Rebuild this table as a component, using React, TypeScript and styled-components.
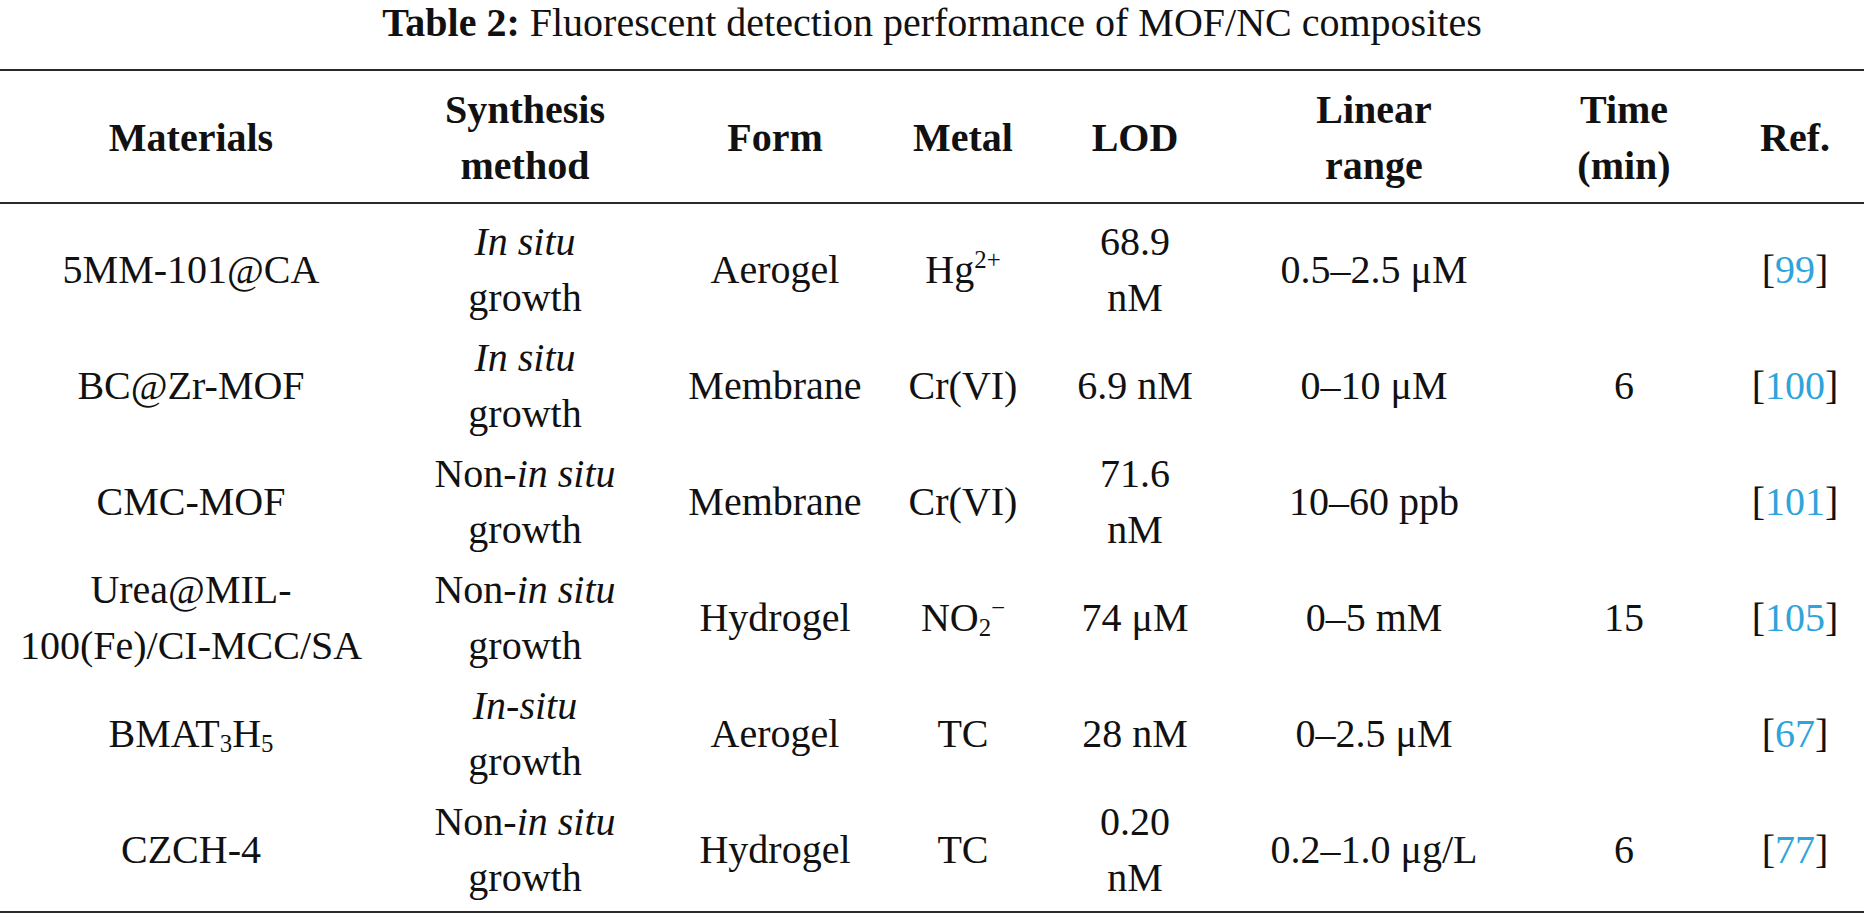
import React from 'react'
import styled, { createGlobalStyle } from 'styled-components'

const GlobalStyle = createGlobalStyle`
  html, body {
    margin: 0;
    padding: 0;
    background: #ffffff;
  }
  body {
    font-family: 'Liberation Serif', 'Times New Roman', serif;
    color: #111111;
  }
`

const Page = styled.div`
  width: 1864px;
  font-size: 40px;
`

const Caption = styled.div`
  text-align: center;
  line-height: 46px;
  height: 46px;
  margin-bottom: 23px;

  b {
    font-weight: 700;
  }
`

const Table = styled.table`
  width: 100%;
  border-collapse: collapse;
  table-layout: fixed;
  border-top: 2px solid #2a2a2a;
  border-bottom: 2px solid #2a2a2a;
`

const HeadCell = styled.th`
  font-weight: 700;
  line-height: 56px;
  padding: 11px 0 8px;
  text-align: center;
  vertical-align: middle;
  white-space: nowrap;
  border-bottom: 2px solid #2a2a2a;
`

const Row = styled.tr<{ $first?: boolean; $last?: boolean }>`
  td {
    padding-top: ${({ $first }) => ($first ? '10px' : '2px')};
    padding-bottom: ${({ $last }) => ($last ? '5px' : '2px')};
  }
`

const Cell = styled.td`
  line-height: 56px;
  text-align: center;
  vertical-align: middle;
  white-space: nowrap;
  padding-left: 0;
  padding-right: 0;
`

const RefLink = styled.a`
  color: #2fa4dc;
  text-decoration: none;
`

const Sup = styled.sup`
  font-size: 0.62em;
  line-height: 0;
  vertical-align: 0.62em;
`

const Sub = styled.sub`
  font-size: 0.62em;
  line-height: 0;
  vertical-align: -0.22em;
`

const columns = [382, 286, 214, 162, 182, 296, 204, 138]

const headers: React.ReactNode[] = [
  'Materials',
  <>Synthesis<br />method</>,
  'Form',
  'Metal',
  'LOD',
  <>Linear<br />range</>,
  <>Time<br />(min)</>,
  'Ref.',
]

type Entry = {
  material: React.ReactNode
  method: React.ReactNode
  form: string
  metal: React.ReactNode
  lod: React.ReactNode
  range: string
  time: string
  ref: string
}

const inSitu = <><i>In situ</i><br />growth</>
const nonInSitu = <>Non-<i>in situ</i><br />growth</>

const rows: Entry[] = [
  {
    material: '5MM-101@CA',
    method: inSitu,
    form: 'Aerogel',
    metal: <>Hg<Sup>2+</Sup></>,
    lod: <>68.9<br />nM</>,
    range: '0.5–2.5 μM',
    time: '',
    ref: '99',
  },
  {
    material: 'BC@Zr-MOF',
    method: inSitu,
    form: 'Membrane',
    metal: 'Cr(VI)',
    lod: '6.9 nM',
    range: '0–10 μM',
    time: '6',
    ref: '100',
  },
  {
    material: 'CMC-MOF',
    method: nonInSitu,
    form: 'Membrane',
    metal: 'Cr(VI)',
    lod: <>71.6<br />nM</>,
    range: '10–60 ppb',
    time: '',
    ref: '101',
  },
  {
    material: <>Urea@MIL-<br />100(Fe)/CI-MCC/SA</>,
    method: nonInSitu,
    form: 'Hydrogel',
    metal: <>NO<Sub>2</Sub><Sup>−</Sup></>,
    lod: '74 μM',
    range: '0–5 mM',
    time: '15',
    ref: '105',
  },
  {
    material: <>BMAT<Sub>3</Sub>H<Sub>5</Sub></>,
    method: <><i>In-situ</i><br />growth</>,
    form: 'Aerogel',
    metal: 'TC',
    lod: '28 nM',
    range: '0–2.5 μM',
    time: '',
    ref: '67',
  },
  {
    material: 'CZCH-4',
    method: nonInSitu,
    form: 'Hydrogel',
    metal: 'TC',
    lod: <>0.20<br />nM</>,
    range: '0.2–1.0 μg/L',
    time: '6',
    ref: '77',
  },
]

export default function App() {
  return (
    <>
      <GlobalStyle />
      <Page>
        <Caption>
          <b>Table 2:</b> Fluorescent detection performance of MOF/NC composites
        </Caption>
        <Table>
          <colgroup>
            {columns.map((w, i) => (
              <col key={i} style={{ width: w }} />
            ))}
          </colgroup>
          <thead>
            <tr>
              {headers.map((h, i) => (
                <HeadCell key={i}>{h}</HeadCell>
              ))}
            </tr>
          </thead>
          <tbody>
            {rows.map((r, i) => (
              <Row key={r.ref} $first={i === 0} $last={i === rows.length - 1}>
                <Cell>{r.material}</Cell>
                <Cell>{r.method}</Cell>
                <Cell>{r.form}</Cell>
                <Cell>{r.metal}</Cell>
                <Cell>{r.lod}</Cell>
                <Cell>{r.range}</Cell>
                <Cell>{r.time}</Cell>
                <Cell>
                  [<RefLink href={'#ref-' + r.ref}>{r.ref}</RefLink>]
                </Cell>
              </Row>
            ))}
          </tbody>
        </Table>
      </Page>
    </>
  )
}
